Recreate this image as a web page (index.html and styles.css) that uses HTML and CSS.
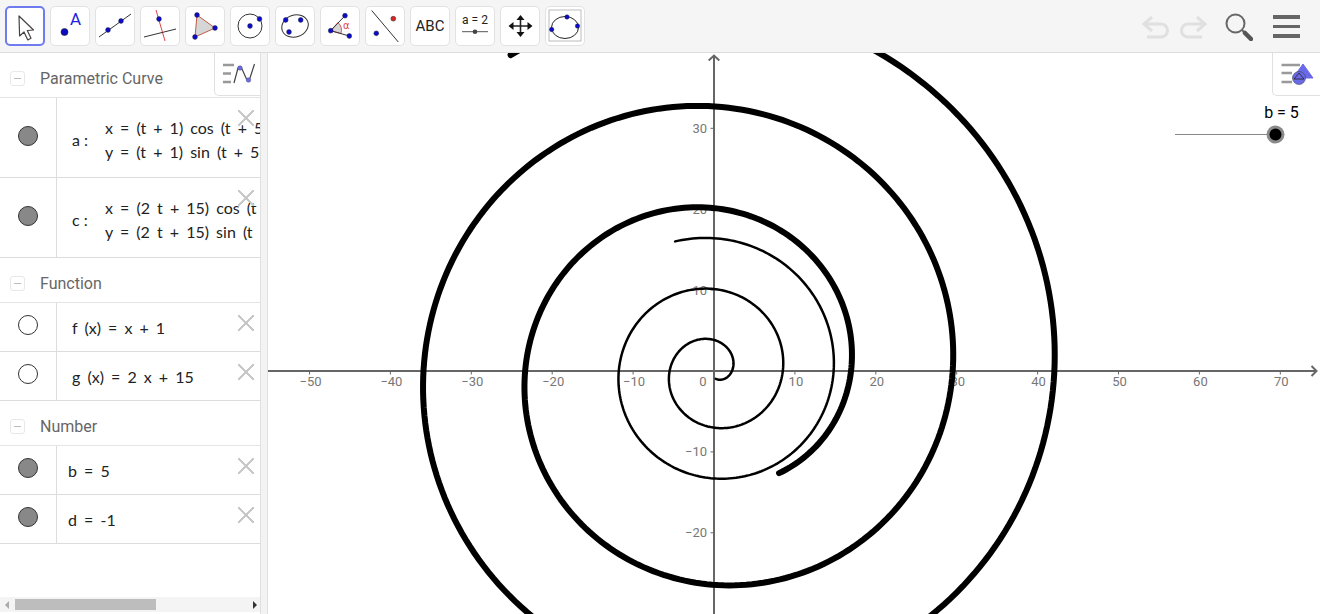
FILE: index.html
```html
<!DOCTYPE html>
<html lang="en">
<head>
<meta charset="utf-8">
<title>Spiral</title>
<link rel="stylesheet" href="styles.css">
</head>
<body>
<header class="toolbar">
  <div class="tools">
    <button class="tool selected"><svg viewBox="0 0 38 38"><path d="M13 9 L13.600 29 L18 25 L21.800 33 L25 31.300 L21.300 23.500 L27.500 23 Z" fill="#fff" stroke="#444" stroke-width="1.200" stroke-linejoin="round"/></svg></button>
    <button class="tool"><svg viewBox="0 0 38 38"><circle cx="13.500" cy="25" r="3.500" fill="#0b0bc0" stroke="#222" stroke-width=".6"/><text x="19" y="18" class="ta">A</text></svg></button>
    <button class="tool"><svg viewBox="0 0 38 38"><path d="M3 30 L35 7" stroke="#333" stroke-width="1"/><circle cx="12" cy="23" r="2.400" class="pt"/><circle cx="25" cy="14" r="2.400" class="pt"/></svg></button>
    <button class="tool"><svg viewBox="0 0 38 38"><path d="M15 3 L24 34" stroke="#e04545" stroke-width="1"/><path d="M3 30 L35 22" stroke="#333" stroke-width="1"/><circle cx="18" cy="12" r="2.400" class="pt"/></svg></button>
    <button class="tool"><svg viewBox="0 0 38 38"><path d="M11 8 L29 21 L9 30 Z" fill="#d6d6d6" stroke="#c45c45" stroke-width="1"/><circle cx="11" cy="8" r="2.400" class="pt"/><circle cx="29" cy="21" r="2.400" class="pt"/><circle cx="9" cy="30" r="2.400" class="pt"/></svg></button>
    <button class="tool"><svg viewBox="0 0 38 38"><circle cx="19" cy="19" r="12" fill="none" stroke="#333" stroke-width="1"/><circle cx="19" cy="19" r="2.400" class="pt"/><circle cx="28.500" cy="12" r="2.400" class="pt"/></svg></button>
    <button class="tool"><svg viewBox="0 0 38 38"><ellipse cx="19" cy="19" rx="13.500" ry="11" transform="rotate(-20 19 19)" fill="none" stroke="#333" stroke-width="1"/><circle cx="9.700" cy="13" r="2.400" class="pt"/><circle cx="24.700" cy="13" r="2.400" class="pt"/><circle cx="13" cy="25" r="2.400" class="pt"/></svg></button>
    <button class="tool"><svg viewBox="0 0 38 38"><path d="M9.700 23.700 L17 15.500 A 11 11 0 0 1 20 26.500 Z" fill="#d6d6d6" stroke="#e04545" stroke-width=".9"/><path d="M24 8.700 L9.700 23.700 L28.300 29" fill="none" stroke="#333" stroke-width="1"/><circle cx="24" cy="8.700" r="2.400" class="pt"/><circle cx="9.700" cy="23.700" r="2.400" class="pt"/><circle cx="28.300" cy="29" r="2.400" class="pt"/><text x="22" y="22" class="talpha">α</text></svg></button>
    <button class="tool"><svg viewBox="0 0 38 38"><path d="M5.700 3.500 L32.300 35" stroke="#333" stroke-width="1"/><circle cx="27.300" cy="11.700" r="2.400" fill="#e02020" stroke="#333" stroke-width=".6"/><circle cx="10.300" cy="26.300" r="2.400" class="pt"/></svg></button>
    <button class="tool"><span class="abc">ABC</span></button>
    <button class="tool"><svg viewBox="0 0 38 38"><text x="19" y="17" class="tslider">a = 2</text><path d="M6 24.700 H32" stroke="#555" stroke-width="1"/><circle cx="19" cy="24.700" r="2.300" fill="#444"/></svg></button>
    <button class="tool"><svg viewBox="0 0 38 38"><path d="M19.500 10 V28 M10.500 19 H28.500" stroke="#222" stroke-width="1.600"/><path d="M19.500 8 L23.500 13 H15.500 Z M19.500 30 L23.500 25 H15.500 Z M7.500 19 L12.500 15 V23 Z M31.500 19 L26.500 15 V23 Z" fill="#111"/></svg></button>
    <button class="tool"><svg viewBox="0 0 38 38"><rect x="3" y="3" width="32" height="31" fill="none" stroke="#bbb" stroke-width="1"/><ellipse cx="19" cy="20.500" rx="13.500" ry="11" fill="none" stroke="#222" stroke-width="1"/><circle cx="21" cy="10" r="2.200" class="pt"/><circle cx="31.500" cy="19" r="2.200" class="pt"/><circle cx="5.700" cy="22.500" r="2.200" class="pt"/></svg></button>
  </div>
  <div class="actions">
    <svg class="undo" viewBox="0 0 28 24"><path d="M3 8 H19 A6.500 6.500 0 0 1 19 21 H5" fill="none" stroke="#e0e0e0" stroke-width="3"/><path d="M10 1 L2 8 L10 15" fill="none" stroke="#e0e0e0" stroke-width="3"/></svg>
    <svg class="redo" viewBox="0 0 28 24"><path d="M25 8 H9 A6.500 6.500 0 0 0 9 21 H23" fill="none" stroke="#e0e0e0" stroke-width="3"/><path d="M18 1 L26 8 L18 15" fill="none" stroke="#e0e0e0" stroke-width="3"/></svg>
    <svg class="search" viewBox="0 0 28 28"><circle cx="10.500" cy="10.500" r="9" fill="none" stroke="#666" stroke-width="2"/><path d="M17 17 L26 26" stroke="#666" stroke-width="2"/><path d="M20 20 L26 26" stroke="#555" stroke-width="4.500" stroke-linecap="round"/></svg>
    <div class="menu"><i></i><i></i><i></i></div>
  </div>
</header>
<main class="workspace">
  <aside class="algebra">
    <div class="list">
      <div class="group"><span class="minus"></span>Parametric Curve</div>
      <div class="row tall">
        <div class="marble-cell"><span class="marble on"></span></div>
        <div class="def">
          <span class="name">a :</span>
          <div class="lines"><div>x = (t + 1) cos (t + 5)</div><div>y = (t + 1) sin (t + 5)</div></div>
        </div>
        <span class="close"></span>
      </div>
      <div class="row tall">
        <div class="marble-cell"><span class="marble on"></span></div>
        <div class="def">
          <span class="name">c :</span>
          <div class="lines"><div>x = (2 t + 15) cos (t − 1)</div><div>y = (2 t + 15) sin (t − 1)</div></div>
        </div>
        <span class="close"></span>
      </div>
      <div class="group"><span class="minus"></span>Function</div>
      <div class="row">
        <div class="marble-cell"><span class="marble"></span></div>
        <div class="def">f (x) = x + 1</div>
        <span class="close"></span>
      </div>
      <div class="row">
        <div class="marble-cell"><span class="marble"></span></div>
        <div class="def">g (x) = 2 x + 15</div>
        <span class="close"></span>
      </div>
      <div class="group"><span class="minus"></span>Number</div>
      <div class="row">
        <div class="marble-cell"><span class="marble on"></span></div>
        <div class="def num">b = 5</div>
        <span class="close"></span>
      </div>
      <div class="row">
        <div class="marble-cell"><span class="marble on"></span></div>
        <div class="def num">d = -1</div>
        <span class="close"></span>
      </div>
    </div>
    <div class="hscroll"><span class="arrow-l"></span><span class="track"><span class="thumb"></span></span><span class="arrow-r"></span></div>
    <div class="stylebar alg"><svg viewBox="0 0 40 30"><path d="M5 6 H16 M5 14.500 H13 M5 23 H13" stroke="#999" stroke-width="2.600"/><path d="M16 24 L20 9 Q22 6 24 10 L28.500 20 Q30.500 23 32 19 L36.500 5" stroke="#444" stroke-width="1.200" fill="none"/><circle cx="22" cy="9" r="2.300" fill="#6a6ae8" stroke="#445" stroke-width=".4"/><circle cx="30.500" cy="21" r="2.300" fill="#6a6ae8" stroke="#445" stroke-width=".4"/></svg></div>
  </aside>
  <div class="divider"></div>
  <section class="graphics">
    <svg class="plot" viewBox="268 53 1052 561">
      <g id="ticks"></g>
      <path d="M268 371 H1316 M1311.500 366 L1316.500 371 L1311.500 376 M714 614 V55.500 M708.700 60.500 L714 55.500 L719.300 60.500" class="axis"/>
      <path id="curve-a" class="thin"/>
      <path id="curve-c" class="thick"/>
      <text x="1281.500" y="118" class="slabel" text-anchor="middle">b = 5</text>
      <path d="M1175 134.500 H1275" class="sline"/>
      <circle cx="1275.500" cy="134.500" r="9" fill="#8a8a8a"/>
      <circle cx="1275.500" cy="134.500" r="6" fill="#000"/>
    </svg>
    <div class="stylebar geo"><svg viewBox="0 0 40 30"><path d="M4.500 6 H23 M4.500 14 H15 M4.500 23 H15" stroke="#999" stroke-width="2.600"/><path d="M26 5 L36 19 H16 Z" fill="#6a6ae8" stroke="#6a6ae8"/><circle cx="22" cy="19" r="6.500" fill="#6a6ae8" stroke="#445" stroke-width=".6"/><path d="M22 14 L27 20 H17 Z" fill="none" stroke="#222" stroke-width=".8"/></svg></div>
  </section>
</main>
<script src="script.js"></script>
</body>
</html>
```
FILE: styles.css
```css
* { box-sizing: border-box; }
html, body { margin: 0; height: 100%; }
body { width: 1320px; height: 614px; overflow: hidden; background: #fff; font-family: Roboto, sans-serif; display: flex; flex-direction: column; }

.toolbar { height: 53px; flex: none; background: #f5f5f5; border-bottom: 1px solid #dcdcdc; display: flex; justify-content: space-between; padding: 6px 20px 0 5px; }
.tools { display: flex; gap: 5px; align-items: flex-start; }
.tool { width: 40px; height: 40px; padding: 0; border: 1px solid #e2e2e2; border-radius: 5px; background: #fff; display: flex; align-items: center; justify-content: center; }
.tool svg { width: 38px; height: 38px; flex: none; display: block; }
.tool.selected { border: 2px solid #6f7cf0; }
.pt { fill: #0b0bd0; stroke: #223; stroke-width: .5; }
.ta { font: 17px Roboto, sans-serif; fill: #2222e0; }
.talpha { font: 10px "DejaVu Sans", sans-serif; fill: #e04545; }
.tslider { font: 12px Roboto, sans-serif; fill: #222; text-anchor: middle; }
.abc { font: 15px Roboto, sans-serif; color: #222; }

.actions { display: flex; align-items: flex-start; }
.undo { width: 28px; height: 24px; margin-top: 10px; }
.redo { width: 28px; height: 24px; margin: 10px 0 0 9px; }
.search { width: 28px; height: 28px; margin: 7px 0 0 18px; }
.menu { width: 27px; margin: 9px 0 0 20px; display: flex; flex-direction: column; gap: 6px; }
.menu i { display: block; height: 3.500px; background: #666; }

.workspace { flex: 1; min-height: 0; display: flex; }
.algebra { width: 260px; flex: none; position: relative; display: flex; flex-direction: column; overflow: hidden; }
.list { flex: 1; min-height: 0; }
.group { height: 45px; padding: 7px 0 0 10px; border-bottom: 1px solid #e4e4e4; display: flex; align-items: center; font-size: 16px; color: #666; }
.minus { width: 15px; height: 15px; border: 1px solid #e8e8e8; border-radius: 3px; margin-right: 15px; position: relative; }
.minus::after { content: ""; position: absolute; left: 3px; right: 3px; top: 6px; height: 1px; background: #bbb; }
.row { height: 49px; border-bottom: 1px solid #dcdcdc; display: flex; position: relative; font: 16px Lato, "Open Sans", sans-serif; color: #222; word-spacing: 3px; }
.row.tall { height: 80px; }
.marble-cell { width: 57px; flex: none; border-right: 1px solid #dcdcdc; padding: 12px 0 0 18px; }
.tall .marble-cell { padding-top: 28px; }
.marble { display: block; width: 20px; height: 20px; border-radius: 50%; border: 1px solid #333; background: #fff; }
.marble.on { background: #888; }
.def { flex: 1; min-width: 0; display: flex; align-items: center; padding: 0 0 0 15px; white-space: pre; overflow: hidden; }
.tall .def { padding-top: 4px; }
.def.num { padding-left: 11px; }
.name { width: 33px; flex: none; word-spacing: 0; }
.lines { line-height: 24px; font-size: 16px; }
.close { position: absolute; right: 6px; top: 12px; width: 16px; height: 16px; background:
  linear-gradient(45deg, transparent 46%, #c8c8c8 46%, #c8c8c8 54%, transparent 54%),
  linear-gradient(-45deg, transparent 46%, #c8c8c8 46%, #c8c8c8 54%, transparent 54%); }

.hscroll { height: 15px; margin-bottom: 2px; flex: none; display: flex; align-items: center; background: #f4f4f4; }
.track { flex: 1; height: 11px; display: block; }
.thumb { display: block; width: 141px; height: 100%; background: #bdbdbd; }
.arrow-l, .arrow-r { width: 0; height: 0; border-style: solid; border-width: 4px 0; border-color: transparent; flex: none; }
.arrow-l { border-right: 4px solid #aaa; margin: 0 6px 0 5px; }
.arrow-r { border-left: 4px solid #333; margin: 0 3px 0 8px; }

.stylebar { position: absolute; background: #fff; border: 1px solid #e0e0e0; border-top: 0; border-right: 0; border-bottom-left-radius: 5px; display: flex; align-items: center; justify-content: center; }
.stylebar svg { width: 40px; height: 30px; flex: none; }
.stylebar.alg { top: 0; right: 0; width: 46px; height: 43px; }
.stylebar.geo { top: 0; right: 0; width: 48px; height: 43px; }

.divider { width: 8px; flex: none; background: #f3f3f3; border-left: 1px solid #e0e0e0; border-right: 1px solid #e0e0e0; }
.graphics { flex: 1; position: relative; overflow: hidden; }
.plot { width: 1052px; height: 561px; display: block; }
.axis { fill: none; stroke: #666; stroke-width: 2; }
.tick { stroke: #666; stroke-width: 1; }
.tlabel { font: 13px Roboto, sans-serif; fill: #777; }
.thin { fill: none; stroke: #000; stroke-width: 2.500; stroke-linecap: round; }
.thick { fill: none; stroke: #000; stroke-width: 6; stroke-linecap: round; }
.slabel { font: 16px Roboto, sans-serif; fill: #000; }
.sline { stroke: #888; stroke-width: 1; }
```
FILE: script.js
```js
(function () {
  var NS = "http://www.w3.org/2000/svg";
  var ox = 714, oy = 371, s = 8.09;

  function spiral(k, c, shift) {
    var d = "", end = 5 * Math.PI;
    for (var i = 0; i <= 600; i++) {
      var t = end * i / 600, r = k * t + c;
      d += (i ? "L" : "M") + (ox - 0.5 + s * r * Math.cos(t + shift)).toFixed(2) + " " + (oy - s * r * Math.sin(t + shift)).toFixed(2);
    }
    return d;
  }
  document.getElementById("curve-a").setAttribute("d", spiral(1, 1, 5));
  document.getElementById("curve-c").setAttribute("d", spiral(2, 15, -1));

  var g = document.getElementById("ticks");
  function add(tag, attrs, txt) {
    var el = document.createElementNS(NS, tag);
    for (var k in attrs) el.setAttribute(k, attrs[k]);
    if (txt) el.textContent = txt;
    g.appendChild(el);
  }
  function label(v) { return (v < 0 ? "\u2212" : "") + Math.abs(v); }
  for (var v = -50; v <= 70; v += 10) {
    if (v === 0) continue;
    var x = ox + s * v;
    add("line", { x1: x, x2: x, y1: 371, y2: 374.5, "class": "tick" });
    add("text", { x: x + 1, y: 386, "class": "tlabel", "text-anchor": "middle" }, label(v));
  }
  add("text", { x: 703, y: 386, "class": "tlabel", "text-anchor": "middle" }, "0");
  [30, 20, 10, -10, -20].forEach(function (n) {
    var y = oy - s * n;
    add("line", { x1: 710.5, x2: 714, y1: y, y2: y, "class": "tick" });
    add("text", { x: 707, y: y + 4.5, "class": "tlabel", "text-anchor": "end" }, label(n));
  });
})();
```
